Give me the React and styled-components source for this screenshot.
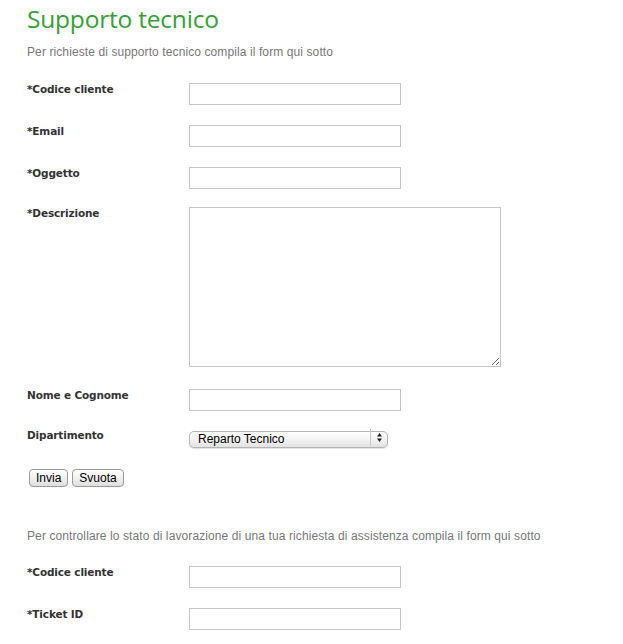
import React from 'react';
import styled, { createGlobalStyle } from 'styled-components';

const GlobalStyle = createGlobalStyle`
  body {
    margin: 0;
    background: #fff;
    font-family: "Liberation Sans", Arial, sans-serif;
  }
`;

const Page = styled.div`
  padding: 0 0 0 27px;
  width: 596px;
`;

const Title = styled.h1`
  margin: 0;
  padding-top: 3px;
  font-family: "Open Sans", "Noto Sans", sans-serif;
  font-weight: 400;
  font-size: 24.5px;
  line-height: 32px;
  color: #35a135;
  letter-spacing: -0.2px;
`;

const Intro = styled.p`
  margin: ${(p) => p.top || 10}px 0 ${(p) => p.bottom ?? 23}px;
  font-size: 12px;
  line-height: 16px;
  letter-spacing: 0.1px;
  color: #777;
`;

const Form = styled.form`
  display: flex;
  flex-direction: column;
`;

const Row = styled.div`
  display: grid;
  grid-template-columns: 162px 1fr;
  align-items: start;
  margin-bottom: ${(p) => p.gap ?? 20}px;
`;

const Label = styled.label`
  font-family: "DejaVu Sans", Verdana, sans-serif;
  font-weight: 700;
  font-size: 10.5px;
  line-height: 12px;
  color: #333;
  padding-top: ${(p) => p.offset ?? 0}px;
  letter-spacing: -0.15px;
`;

const TextInput = styled.input`
  box-sizing: border-box;
  width: 212px;
  height: 22px;
  margin: 0;
  border: 1px solid #c6c6c6;
  background: #fff;
  outline: none;
  padding: 2px 4px;
  font-size: 12px;
`;

const TextArea = styled.textarea`
  box-sizing: border-box;
  display: block;
  width: 312px;
  height: 160px;
  margin: 0;
  border: 1px solid #c6c6c6;
  outline: none;
  padding: 2px 4px;
  font-size: 12px;
  font-family: "Liberation Sans", Arial, sans-serif;
`;

const SelectWrap = styled.div`
  position: relative;
  width: 199px;
  height: 17px;
  margin-top: 1px;
`;

const Select = styled.select`
  appearance: none;
  box-sizing: border-box;
  width: 100%;
  height: 17px;
  margin: 0;
  padding: 0 20px 0 8px;
  border: 1px solid #b4b4b4;
  border-radius: 5px;
  background: linear-gradient(#ffffff, #f3f3f3 50%, #e2e2e2);
  box-shadow: 0 1px 1px rgba(0, 0, 0, 0.12);
  font-family: "Liberation Sans", Arial, sans-serif;
  font-size: 12px;
  line-height: 15px;
  color: #000;
  outline: none;
`;

const Arrows = styled.svg`
  position: absolute;
  right: 0;
  top: 0;
  width: 17px;
  height: 17px;
  pointer-events: none;
  border-left: 1px solid #c8c8c8;
`;

const Buttons = styled.div`
  display: flex;
  gap: 4px;
  padding-left: 2px;
  margin-top: 2px;
`;

const Button = styled.button`
  box-sizing: border-box;
  height: 18px;
  padding: 0 6px;
  border: 1px solid #9a9a9a;
  border-radius: 4px;
  background: linear-gradient(#ffffff, #f1f1f1 50%, #dedede);
  font-family: "Liberation Sans", Arial, sans-serif;
  font-size: 12px;
  line-height: 14px;
  color: #000;
`;

const Field = ({ label, children, gap, offset }) => (
  <Row gap={gap}>
    <Label offset={offset}>{label}</Label>
    <div>{children}</div>
  </Row>
);

export default function App() {
  return (
    <Page>
      <GlobalStyle />
      <Title>Supporto tecnico</Title>
      <Intro top={9}>Per richieste di supporto tecnico compila il form qui sotto</Intro>
      <Form>
        <Field label="*Codice cliente"><TextInput /></Field>
        <Field label="*Email"><TextInput /></Field>
        <Field label="*Oggetto" gap={18}><TextInput /></Field>
        <Field label="*Descrizione" gap={22}><TextArea /></Field>
        <Field label="Nome e Cognome" gap={17}><TextInput /></Field>
        <Field label="Dipartimento" gap={21} offset={1}>
          <SelectWrap>
            <Select defaultValue="tecnico">
              <option value="tecnico">Reparto Tecnico</option>
              <option value="commerciale">Reparto Commerciale</option>
            </Select>
            <Arrows viewBox="0 0 17 17">
              <path d="M8.5 4 L11 7.5 H6 Z" fill="#222" />
              <path d="M8.5 13 L11 9.5 H6 Z" fill="#222" />
            </Arrows>
          </SelectWrap>
        </Field>
        <Buttons>
          <Button type="button">Invia</Button>
          <Button type="button">Svuota</Button>
        </Buttons>
      </Form>
      <Intro top={41} bottom={22}>
        Per controllare lo stato di lavorazione di una tua richiesta di assistenza compila il form qui sotto
      </Intro>
      <Form>
        <Field label="*Codice cliente"><TextInput /></Field>
        <Field label="*Ticket ID"><TextInput /></Field>
      </Form>
    </Page>
  );
}
